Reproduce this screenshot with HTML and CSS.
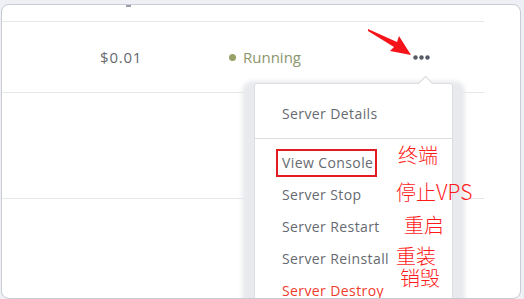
FILE: index.html
```html
<!DOCTYPE html>
<html>
<head>
<meta charset="utf-8">
<link rel="stylesheet" href="styles.css">
</head>
<body>
<div class="card">
  <div class="table">
    <div class="row-head"><span class="head-mark"></span></div>
    <div class="row">
      <div class="cell price">$0.01</div>
      <div class="cell status"><span class="dot"></span>Running</div>
      <div class="cell more">
        <svg width="17" height="5" viewBox="0 0 17 5"><circle cx="2.5" cy="2.5" r="2.2" fill="#555a66"/><circle cx="8.5" cy="2.5" r="2.2" fill="#555a66"/><circle cx="14.5" cy="2.5" r="2.2" fill="#555a66"/></svg>
      </div>
    </div>
    <div class="row row-tall"></div>
  </div>

  <svg class="pointer" width="55" height="40" viewBox="0 0 55 40"><polygon points="8,9 37,22 39,16 51,35 30,31 34,27 8,11" fill="#f5141a"/></svg>

  <div class="dropdown">
    <span class="caret"></span>
    <div class="dd-head">Server Details</div>
    <ul class="dd-list">
      <li><span class="boxed">View Console</span></li>
      <li>Server Stop</li>
      <li>Server Restart</li>
      <li>Server Reinstall</li>
      <li class="danger">Server Destroy</li>
    </ul>
  </div>

  <span class="note n1">终端</span>
  <span class="note n2">停止<span class="latin">VPS</span></span>
  <span class="note n3">重启</span>
  <span class="note n4">重装</span>
  <span class="note n5">销毁</span>
</div>
</body>
</html>
```

FILE: styles.css
```css
html, body {
  margin: 0;
  padding: 0;
}
body {
  background: #eef0f5;
  font-family: "Open Sans", "Liberation Sans", sans-serif;
  width: 524px;
  height: 299px;
  overflow: hidden;
}
.card {
  position: relative;
  margin: 4px 3px 0 1px;
  height: 293px;
  border: 1px solid #c8cbd3;
  border-radius: 8px;
  background: #fff;
  overflow: hidden;
}
.table {
  width: 482px;
}
.row-head {
  height: 16px;
  border-bottom: 1px solid #e6e7ea;
}
.head-mark {
  display: block;
  margin-left: 124px;
  width: 5px;
  height: 2px;
  background: #9aa0ab;
}
.row {
  height: 70px;
  border-bottom: 1px solid #e6e7ea;
  display: grid;
  grid-template-columns: 129px 184px 1fr;
  padding-left: 98px;
  align-items: center;
}
.row-tall {
  height: 105px;
  display: block;
}
.cell {
  font-size: 15px;
  color: #666a70;
}
.price {
  letter-spacing: 0.8px;
}
.status {
  display: flex;
  align-items: center;
  color: #8c966c;
}
.dot {
  width: 7px;
  height: 7px;
  border-radius: 50%;
  background: #96a266;
  margin-right: 7px;
}
.more {
  display: flex;
  align-items: center;
}
.more svg {
  display: block;
}
.pointer {
  position: absolute;
  left: 358px;
  top: 15px;
}
.dropdown {
  position: absolute;
  left: 252px;
  top: 78px;
  width: 197px;
  height: 240px;
  background: #fff;
  border: 1px solid #dcdde1;
  border-radius: 3px;
  box-shadow: 0 10px 4px 12px #e9eaed;
}
.caret {
  position: absolute;
  top: -6px;
  left: 165px;
  width: 10px;
  height: 10px;
  background: #fff;
  border-left: 1px solid #d6d8dc;
  border-top: 1px solid #d6d8dc;
  transform: rotate(45deg);
}
.dd-head {
  padding: 20px 0 14px 27px;
  line-height: 20px;
  font-size: 14px;
  letter-spacing: 0.4px;
  color: #666a70;
  border-bottom: 1px solid #dcdde1;
}
.dd-list {
  list-style: none;
  margin: 0;
  padding: 8px 0 0 0;
}
.dd-list li {
  height: 32px;
  line-height: 32px;
  padding-left: 27px;
  font-size: 14px;
  letter-spacing: 0.4px;
  color: #666a70;
}
.dd-list li.danger {
  color: #ef3b2c;
}
.boxed {
  display: inline-block;
  line-height: 20px;
  border: 2px solid #e31b23;
  padding: 2px 2px 2px 4px;
  margin-left: -6px;
  vertical-align: middle;
  position: relative;
  top: -1px;
}
.note {
  position: absolute;
  color: #ff1a1a;
  font-family: "Noto Sans CJK SC", "Liberation Sans", sans-serif;
  font-weight: 300;
  font-size: 20px;
  line-height: 19px;
  height: 19px;
  white-space: nowrap;
}
.note .latin {
  font-size: 21px;
}
.n1 { left: 396px; top: 140px; }
.n2 { left: 394px; top: 177px; }
.n3 { left: 402px; top: 210px; }
.n4 { left: 394px; top: 241px; }
.n5 { left: 398px; top: 263px; }
```
